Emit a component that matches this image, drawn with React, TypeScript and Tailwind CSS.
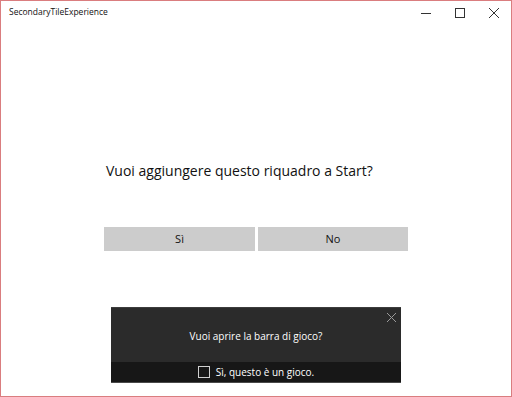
import React from 'react'

/** Window chrome caption button glyphs (Win10 style, thin strokes) */
function CaptionButtons() {
  return (
    <div className="flex h-full">
      <div className="w-[34px] h-full flex items-center justify-center">
        <svg width="10" height="10" viewBox="0 0 10 10" stroke="#333" strokeWidth="1" fill="none">
          <line x1="0" y1="5.5" x2="10" y2="5.5" />
        </svg>
      </div>
      <div className="w-[34px] h-full flex items-center justify-center">
        <svg width="10" height="10" viewBox="0 0 10 10" stroke="#333" strokeWidth="1" fill="none">
          <rect x="0.5" y="0.5" width="9" height="9" />
        </svg>
      </div>
      <div className="w-[34px] h-full flex items-center justify-center">
        <svg width="10" height="10" viewBox="0 0 10 10" stroke="#333" strokeWidth="1" fill="none">
          <line x1="0" y1="0" x2="10" y2="10" />
          <line x1="10" y1="0" x2="0" y2="10" />
        </svg>
      </div>
    </div>
  )
}

export default function App() {
  return (
    <div
      className="w-[512px] h-[397px] flex flex-col bg-white border border-[#da7d7f] overflow-hidden"
      style={{ fontFamily: '"Open Sans", "Liberation Sans", sans-serif' }}
    >
      {/* Title bar */}
      <header className="h-[23px] flex items-center shrink-0">
        <div className="pl-2 text-[8.5px] text-[#111] flex-1 leading-none">SecondaryTileExperience</div>
        <CaptionButtons />
      </header>

      {/* Page content */}
      <main className="flex-1 flex flex-col items-center relative">
        <div className="w-[304px] mt-[137px] text-[14px] text-[#111] pl-[2px] leading-5">
          Vuoi aggiungere questo riquadro a Start?
        </div>
        <div className="w-[304px] mt-[46px] flex gap-[3px]">
          <button className="w-[151px] h-6 bg-[#cccccc] text-[11px] text-[#111]">Sì</button>
          <button className="w-[150px] h-6 bg-[#cccccc] text-[11px] text-[#111]">No</button>
        </div>

        {/* Game bar prompt toast */}
        <div className="absolute left-[110px] top-[283px] w-[290px] flex flex-col border-t border-[#3d3d3d]">
          <div className="h-[54px] bg-[#2b2b2b] relative flex items-center justify-center">
            <span className="text-[10px] text-white pt-[3px]">Vuoi aprire la barra di gioco?</span>
            <svg className="absolute right-[5px] top-[5px]" width="9" height="9" viewBox="0 0 9 9" stroke="#9a9a9a" strokeWidth="1">
              <line x1="0" y1="0" x2="9" y2="9" />
              <line x1="9" y1="0" x2="0" y2="9" />
            </svg>
          </div>
          <div className="h-[21px] bg-[#171717] flex items-center justify-center gap-[6px] border-b border-[#4a4a4a]">
            <span className="w-[12px] h-[12px] border border-[#d0d0d0]" />
            <span className="text-[10px] text-white">Sì, questo è un gioco.</span>
          </div>
        </div>
      </main>
    </div>
  )
}
